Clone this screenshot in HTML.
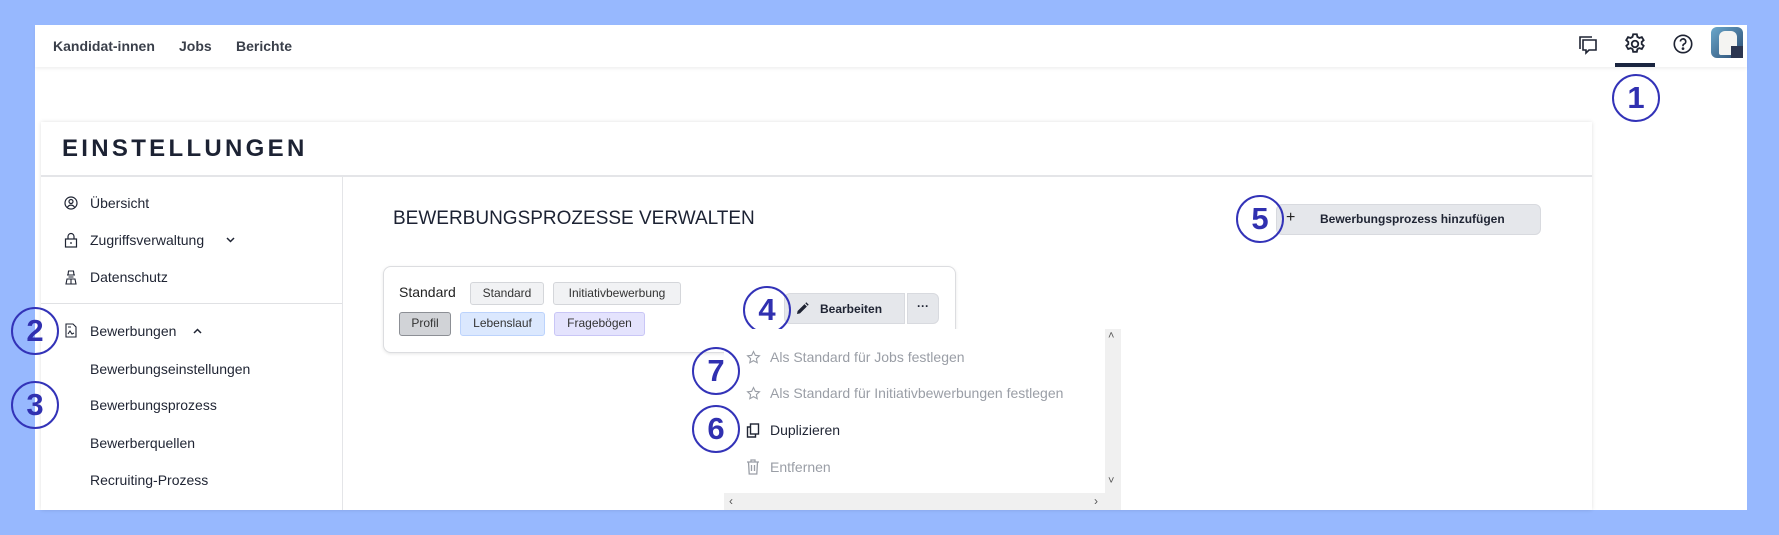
<!DOCTYPE html>
<html><head><meta charset="utf-8"><style>
*{margin:0;padding:0;box-sizing:border-box}
body{width:1779px;height:535px;background:#97b8fe;font-family:"Liberation Sans",sans-serif;color:#1f2433;position:relative;overflow:hidden}
.a{position:absolute;white-space:nowrap}
.c{position:absolute;width:48px;height:48px;border:2px solid #3333b8;border-radius:50%;background:transparent;color:#3030b0;font-size:31px;font-weight:bold;text-align:center;line-height:44px;margin:-24px 0 0 -24px}
.nav{font-size:14px;font-weight:bold;color:#3a3f4a;top:38px}
.si{font-size:14px;color:#1f2433}
.tag{position:absolute;height:23px;border:1px solid #d4d6da;background:#f1f2f4;border-radius:3px;font-size:12px;line-height:21px;text-align:center;color:#333}
.dd{font-size:14px;color:#9a9ea6}
</style></head><body>
<div class="a" style="left:35px;top:25px;width:1712px;height:485px;background:#fff"></div>
<div class="a" style="left:35px;top:25px;width:1712px;height:42px;background:#fff;box-shadow:0 2px 3px rgba(0,0,0,.06)"></div>
<div class="a nav" style="left:53px">Kandidat-innen</div>
<div class="a nav" style="left:179px">Jobs</div>
<div class="a nav" style="left:236px">Berichte</div>
<svg class="a" style="left:1577px;top:34px" width="22" height="22" viewBox="0 0 22 22" fill="none" stroke="#1f2433" stroke-width="1.6"><path d="M3 15V3h12"/><path d="M6 6h13v10h-7l-3 3v-3H6z"/></svg>
<svg class="a" style="left:1622px;top:31px" width="26" height="26" viewBox="0 0 24 24" fill="none" stroke="#1f2433" stroke-width="1.7"><circle cx="12" cy="12" r="3"/><path d="M10.3 3h3.4l.5 2.4 1.8 1 2.3-.8 1.7 2.9-1.8 1.6v2l1.8 1.6-1.7 2.9-2.3-.8-1.8 1-.5 2.4h-3.4l-.5-2.4-1.8-1-2.3.8-1.7-2.9 1.8-1.6v-2L3.9 8.5l1.7-2.9 2.3.8 1.8-1z"/></svg>
<div class="a" style="left:1615px;top:63px;width:40px;height:4px;background:#1a2540"></div>
<svg class="a" style="left:1672px;top:33px" width="22" height="22" viewBox="0 0 24 24" fill="none" stroke="#1f2433" stroke-width="1.8"><circle cx="12" cy="12" r="9.5"/><path d="M9.2 9.3a2.9 2.9 0 1 1 4 2.7c-.8.4-1.2 1-1.2 1.8v.7"/><circle cx="12" cy="17" r=".6" fill="#1f2433"/></svg>
<div class="a" style="left:1711px;top:27px;width:32px;height:31px;border-radius:6px;background:linear-gradient(135deg,#6aa8cc,#2a4a70)"></div>
<div class="a" style="left:1719px;top:31px;width:18px;height:24px;background:#f4f4f2;border-radius:6px 6px 2px 2px"></div>
<div class="a" style="left:1731px;top:46px;width:12px;height:12px;background:#2b3550"></div>

<div class="c" style="left:1636px;top:98px">1</div>

<div class="a" style="left:41px;top:122px;width:1551px;height:388px;background:#fff;box-shadow:0 0 4px rgba(0,0,0,.12)"></div>
<div class="a" style="left:62px;top:135px;font-size:24px;font-weight:bold;letter-spacing:3.3px;color:#1c2233">EINSTELLUNGEN</div>
<div class="a" style="left:41px;top:175px;width:1551px;height:2px;background:#e4e5e8"></div>
<div class="a" style="left:342px;top:176px;width:1px;height:334px;background:#e4e5e8"></div>
<div class="a" style="left:41px;top:303px;width:301px;height:1px;background:#e0e1e4"></div>

<svg class="a" style="left:64px;top:196px" width="14" height="14" viewBox="0 0 14 14" fill="none" stroke="#1f2433" stroke-width="1.2"><circle cx="7" cy="7" r="6"/><circle cx="7" cy="5.5" r="2"/><path d="M3.3 11.4c1-1.6 2.2-2.3 3.7-2.3s2.7.7 3.7 2.3"/></svg>
<div class="a si" style="left:90px;top:195px">Übersicht</div>
<svg class="a" style="left:64px;top:232px" width="14" height="16" viewBox="0 0 14 16" fill="none" stroke="#1f2433" stroke-width="1.2"><rect x="1.5" y="7" width="11" height="8"/><path d="M4 7V4.5a3 3 0 0 1 6 0V7M7 10v2"/></svg>
<div class="a si" style="left:90px;top:232px">Zugriffsverwaltung</div>
<svg class="a" style="left:226px;top:237px" width="9" height="6" viewBox="0 0 9 6" fill="none" stroke="#1f2433" stroke-width="1.5"><path d="M1 1l3.5 3.5L8 1"/></svg>
<svg class="a" style="left:64px;top:269px" width="14" height="16" viewBox="0 0 14 16" fill="none" stroke="#1f2433" stroke-width="1.1"><path d="M3 6h8M4 6l.5-4h5l.5 4M4.5 8h5M2 15l1-5h8l1 5zM7 10v5"/></svg>
<div class="a si" style="left:90px;top:269px">Datenschutz</div>
<svg class="a" style="left:65px;top:323px" width="12" height="15" viewBox="0 0 12 15" fill="none" stroke="#1f2433" stroke-width="1.1"><path d="M1 1h7l3 3v10H1z"/><path d="M3 4h3M3 11l2-3 2 3 2-1"/></svg>
<div class="a si" style="left:90px;top:323px">Bewerbungen</div>
<svg class="a" style="left:193px;top:328px" width="9" height="6" viewBox="0 0 9 6" fill="none" stroke="#1f2433" stroke-width="1.5"><path d="M1 5l3.5-3.5L8 5"/></svg>
<div class="a si" style="left:90px;top:361px">Bewerbungseinstellungen</div>
<div class="a si" style="left:90px;top:397px">Bewerbungsprozess</div>
<div class="a si" style="left:90px;top:435px">Bewerberquellen</div>
<div class="a si" style="left:90px;top:472px">Recruiting-Prozess</div>
<div class="c" style="left:35px;top:331px">2</div>
<div class="c" style="left:35px;top:405px">3</div>

<div class="a" style="left:393px;top:208px;font-size:19px;color:#1c2233">BEWERBUNGSPROZESSE VERWALTEN</div>
<div class="a" style="left:1276px;top:204px;width:265px;height:31px;background:#e5e7eb;border:1px solid #d8dadf;border-radius:6px"></div>
<div class="a" style="left:1286px;top:209px;font-size:16px;color:#222">+</div>
<div class="a" style="left:1320px;top:212px;font-size:12px;font-weight:bold;color:#1f2433">Bewerbungsprozess hinzufügen</div>
<div class="c" style="left:1260px;top:219px">5</div>

<div class="a" style="left:383px;top:266px;width:573px;height:87px;border:1px solid #dcdde0;border-radius:8px;box-shadow:0 1px 3px rgba(0,0,0,.1);background:#fff"></div>
<div class="a" style="left:399px;top:284px;font-size:14px;color:#222">Standard</div>
<div class="tag" style="left:470px;top:282px;width:74px">Standard</div>
<div class="tag" style="left:553px;top:282px;width:128px">Initiativbewerbung</div>
<div class="tag" style="left:399px;top:312px;width:52px;height:24px;background:#d1d3d7;border-color:#8c8f95">Profil</div>
<div class="tag" style="left:460px;top:312px;width:85px;height:24px;background:#dbe8fe;border-color:#bcd3fc">Lebenslauf</div>
<div class="tag" style="left:554px;top:312px;width:91px;height:24px;background:#e4e3fd;border-color:#c9c6f6">Fragebögen</div>
<div class="a" style="left:784px;top:293px;width:121px;height:31px;background:#e5e7eb;border:1px solid #d8dadf;border-radius:6px 0 0 6px"></div>
<svg class="a" style="left:796px;top:302px" width="13" height="13" viewBox="0 0 13 13"><path d="M1 12l.6-3L8.5 2.1l2.4 2.4L4 11.4z" fill="#1f2433"/><path d="M9.3 1.3l1-1 2.4 2.4-1 1z" fill="#1f2433"/></svg>
<div class="a" style="left:820px;top:302px;font-size:12px;font-weight:bold;color:#1f2433">Bearbeiten</div>
<div class="a" style="left:907px;top:293px;width:32px;height:31px;background:#e5e7eb;border:1px solid #d8dadf;border-radius:0 6px 6px 0;text-align:center;font-size:12px;font-weight:bold;line-height:24px">···</div>
<div class="c" style="left:767px;top:310px">4</div>

<div class="a" style="left:724px;top:329px;width:397px;height:181px;background:#fff"></div>
<div class="a" style="left:1105px;top:329px;width:16px;height:181px;background:#f0f0f0"></div>
<div class="a" style="left:724px;top:493px;width:397px;height:17px;background:#f0f0f0"></div>
<div class="a" style="left:1108px;top:330px;font-size:11px;color:#555">˄</div>
<div class="a" style="left:1108px;top:475px;font-size:11px;color:#555">˅</div>
<div class="a" style="left:729px;top:494px;font-size:12px;color:#555">‹</div>
<div class="a" style="left:1094px;top:494px;font-size:12px;color:#555">›</div>
<svg class="a" style="left:746px;top:350px" width="15" height="15" viewBox="0 0 24 24" fill="none" stroke="#9a9ea6" stroke-width="1.8"><path d="M12 2.5l2.9 6 6.6.8-4.9 4.5 1.3 6.5L12 17l-5.9 3.3 1.3-6.5-4.9-4.5 6.6-.8z"/></svg>
<div class="a dd" style="left:770px;top:349px">Als Standard für Jobs festlegen</div>
<svg class="a" style="left:746px;top:386px" width="15" height="15" viewBox="0 0 24 24" fill="none" stroke="#9a9ea6" stroke-width="1.8"><path d="M12 2.5l2.9 6 6.6.8-4.9 4.5 1.3 6.5L12 17l-5.9 3.3 1.3-6.5-4.9-4.5 6.6-.8z"/></svg>
<div class="a dd" style="left:770px;top:385px">Als Standard für Initiativbewerbungen festlegen</div>
<svg class="a" style="left:746px;top:423px" width="14" height="15" viewBox="0 0 14 15" fill="none" stroke="#1f2433" stroke-width="1.4"><rect x="4.5" y="1" width="8" height="10"/><path d="M4.5 4H1.5v10h8v-3"/></svg>
<div class="a" style="left:770px;top:422px;font-size:14px;color:#1f2433">Duplizieren</div>
<svg class="a" style="left:746px;top:459px" width="14" height="16" viewBox="0 0 14 16" fill="none" stroke="#9a9ea6" stroke-width="1.3"><path d="M1 3h12M5 3V1h4v2M2.5 3l.7 12h7.6l.7-12M5.5 6v6M8.5 6v6"/></svg>
<div class="a dd" style="left:770px;top:459px">Entfernen</div>
<div class="c" style="left:716px;top:371px">7</div>
<div class="c" style="left:716px;top:429px">6</div>
</body></html>
